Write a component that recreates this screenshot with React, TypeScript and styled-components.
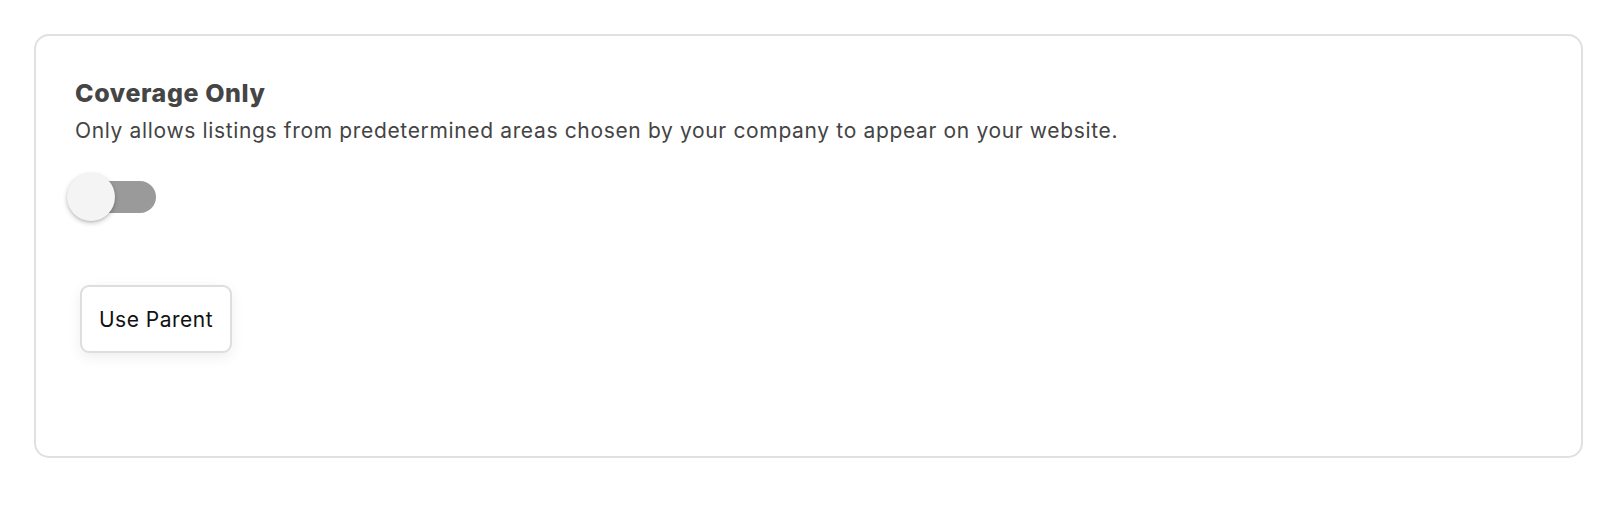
import React, { useState } from 'react';
import styled, { createGlobalStyle } from 'styled-components';

const GlobalStyle = createGlobalStyle`
    html, body {
        margin : 0;
        padding : 0;
        background : #ffffff;
    }
    body {
        font-family : Inter, "Noto Sans", "Liberation Sans", sans-serif;
        color : #444444;
    }
`;

const Page = styled.div`
    padding : 34px;
`;

const Card = styled.section`
    box-sizing : border-box;
    width : 1549px;
    height : 424px;
    border : 2px solid #e0e0e0;
    border-radius : 15px;
    padding : 42px 39px;
    display : flex;
    flex-direction : column;
    align-items : flex-start;
`;

const Title = styled.h2`
    margin : 0;
    font-size : 25px;
    line-height : 30px;
    font-weight : 800;
    letter-spacing : 0.6px;
    color : #454545;
`;

const Description = styled.p`
    margin : 10px 0 0;
    font-size : 21px;
    line-height : 26px;
    letter-spacing : 0.65px;
    color : #444444;
`;

const SwitchTrack = styled.button<{ $on: boolean }>`
    position : relative;
    margin-top : 37px;
    width : 81px;
    height : 32px;
    padding : 0;
    border : none;
    border-radius : 16px;
    background : ${p => (p.$on ? '#7aa7e0' : '#9a9a9a')};
    cursor : pointer;
`;

const SwitchKnob = styled.span<{ $on: boolean }>`
    position : absolute;
    top : -8px;
    left : ${p => (p.$on ? '40px' : '-8px')};
    width : 48px;
    height : 48px;
    border-radius : 50%;
    background : #f4f4f4;
    box-shadow : 0 2px 5px rgba(0, 0, 0, 0.22), 0 1px 2px rgba(0, 0, 0, 0.1);
    transition : left 0.15s;
`;

const ParentButton = styled.button`
    box-sizing : border-box;
    margin-top : 72px;
    margin-left : 5px;
    width : 152px;
    height : 68px;
    padding : 0;
    background : #ffffff;
    border : 2px solid #dedede;
    border-radius : 9px;
    box-shadow : 0 4px 14px rgba(0, 0, 0, 0.07);
    font-family : Inter, "Noto Sans", "Liberation Sans", sans-serif;
    font-size : 21px;
    letter-spacing : 0.5px;
    color : #111111;
    cursor : pointer;
`;

const App = () => {
    const [on, setOn] = useState(false);

    return (
        <Page>
            <GlobalStyle />
            <Card>
                <Title>Coverage Only</Title>
                <Description>
                    Only allows listings from predetermined areas chosen by your company to appear on your website.
                </Description>
                <SwitchTrack $on={on} onClick={() => setOn(!on)} aria-label="Coverage Only">
                    <SwitchKnob $on={on} />
                </SwitchTrack>
                <ParentButton>Use Parent</ParentButton>
            </Card>
        </Page>
    );
};

export default App;
